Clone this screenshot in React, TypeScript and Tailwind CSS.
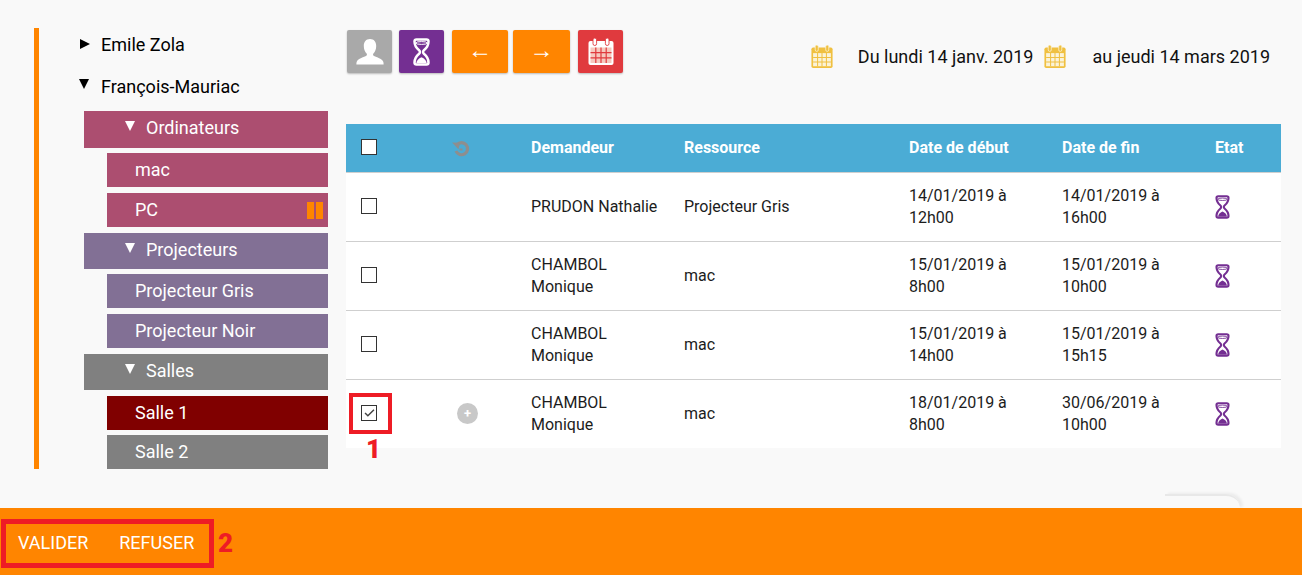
import React from 'react';

const ROWS = [
  { demandeur: 'PRUDON Nathalie', ressource: 'Projecteur Gris', debut: ['14/01/2019 à', '12h00'], fin: ['14/01/2019 à', '16h00'] },
  { demandeur: 'CHAMBOL Monique', ressource: 'mac', debut: ['15/01/2019 à', '8h00'], fin: ['15/01/2019 à', '10h00'] },
  { demandeur: 'CHAMBOL Monique', ressource: 'mac', debut: ['15/01/2019 à', '14h00'], fin: ['15/01/2019 à', '15h15'] },
  { demandeur: 'CHAMBOL Monique', ressource: 'mac', debut: ['18/01/2019 à', '8h00'], fin: ['30/06/2019 à', '10h00'], checked: true },
];

const Hourglass: React.FC<{ className?: string }> = ({ className }) => (
  <svg viewBox="0 0 17 28" className={className} fill="none">
    <path
      d="M3.500 1.500h10c1.200 0 2 .8 2 2 0 4.200-2.200 6.800-4.600 8.800-1.100.9-1.100 2.500 0 3.400 2.400 2 4.600 4.600 4.600 8.800 0 1.200-.8 2-2 2h-10c-1.200 0-2-.8-2-2 0-4.200 2.200-6.800 4.600-8.800 1.100-.9 1.100-2.500 0-3.400C3.700 10.300 1.500 7.700 1.500 3.500c0-1.200.8-2 2-2z"
      stroke="currentColor"
      strokeWidth="2.500"
    />
    <ellipse cx="8.500" cy="5" rx="5.500" ry="1.400" stroke="currentColor" strokeWidth="1" />
    <path d="M3.300 25.300c.3-2.800 2.300-4.800 5.200-6 2.900 1.200 4.900 3.200 5.200 6z" fill="currentColor" />
  </svg>
);

const Calendar: React.FC<{ className?: string; grid: string; lines?: string }> = ({ className, grid, lines }) => (
  <svg viewBox="0 0 26 27" className={className}>
    <rect x="0.500" y="3" width="25" height="24" rx="2" fill="currentColor" />
    <rect x="5" y="0" width="3.600" height="7.500" rx="1.800" fill="currentColor" stroke={lines ?? grid} strokeWidth="0.900" />
    <rect x="17.400" y="0" width="3.600" height="7.500" rx="1.800" fill="currentColor" stroke={lines ?? grid} strokeWidth="0.900" />
    <rect x="2.500" y="9.500" width="21" height="15.500" fill={grid} />
    <path d="M7.800 9.500v15.500M13 9.500v15.500M18.200 9.500v15.500M2.500 14.700h21M2.500 19.900h21" stroke={lines ?? 'currentColor'} strokeWidth="1.200" />
  </svg>
);

const TreeItem: React.FC<{ label: string; className: string; badge?: boolean }> = ({ label, className, badge }) => (
  <div className={`ml-[23px] h-[34px] pl-[28px] pr-[5px] flex items-center justify-between text-[18px] text-white ${className}`}>
    <span className="mb-[2px]">{label}</span>
    {badge && (
      <span className="flex gap-[2px]">
        <span className="w-[7px] h-[17px] bg-[#ff8500]" />
        <span className="w-[7px] h-[17px] bg-[#ff8500]" />
      </span>
    )}
  </div>
);

const TreeGroup: React.FC<{ label: string; className: string }> = ({ label, className }) => (
  <div className={`h-[37px] pl-[41px] flex items-center gap-[11px] text-[18px] text-white ${className}`}>
    <span className="w-0 h-0 border-x-[5.500px] border-x-transparent border-t-[10px] border-t-white mb-[7px]" />
    <span className="mb-[4px]">{label}</span>
  </div>
);

const Check: React.FC<{ checked?: boolean; header?: boolean }> = ({ checked, header }) => (
  <div className={`w-4 h-4 mb-[2px] border-[1.500px] border-[#333] flex items-center justify-center ${header ? 'bg-white' : ''}`}>
    {checked && (
      <svg viewBox="0 0 16 16" className="w-[13px] h-[13px] text-[#444]" fill="none">
        <path d="M2.500 8.500l3.500 3.500 7.500-7.500" stroke="currentColor" strokeWidth="1.800" />
      </svg>
    )}
  </div>
);

const ToolButton: React.FC<{ className: string; children: React.ReactNode }> = ({ className, children }) => (
  <button className={`h-[43px] rounded-[2px] flex items-center justify-center text-white shadow-[0_1px_2px_rgba(0,0,0,0.25)] ${className}`}>
    {children}
  </button>
);

export default function App() {
  return (
    <div className="h-screen flex flex-col bg-[#f9f9f9] overflow-hidden text-black font-['Roboto',sans-serif]">
      <div className="relative flex-1 flex">
        {/* arbre des ressources */}
        <aside className="ml-[34px] mt-[28px] h-[441px] w-[294px] border-l-[5px] border-[#ff8500] pl-[45px] shrink-0">
          <div className="h-[34px] pb-[2px] flex items-center gap-[11px] text-[18px]">
            <span className="ml-[-4px] w-0 h-0 border-y-[5px] border-y-transparent border-l-[10px] border-l-black mb-[1px]" />
            <span>Emile Zola</span>
          </div>
          <div className="h-[49px] flex items-center gap-[12px] text-[18px]">
            <span className="ml-[-5px] w-0 h-0 border-x-[5.500px] border-x-transparent border-t-[10px] border-t-black mb-[6px]" />
            <span>François-Mauriac</span>
          </div>
          <div className="flex flex-col">
            <TreeGroup label="Ordinateurs" className="bg-[#ac4e70]" />
            <TreeItem label="mac" className="bg-[#ac4e70] mt-[5px]" />
            <TreeItem label="PC" badge className="bg-[#ac4e70] mt-[6px]" />
            <TreeGroup label="Projecteurs" className="bg-[#827095] mt-[6px] !h-[36px]" />
            <TreeItem label="Projecteur Gris" className="bg-[#827095] mt-[5px]" />
            <TreeItem label="Projecteur Noir" className="bg-[#827095] mt-[6px]" />
            <TreeGroup label="Salles" className="bg-[#808080] mt-[6px] !h-[36px]" />
            <TreeItem label="Salle 1" className="bg-[#800000] mt-[6px]" />
            <TreeItem label="Salle 2" className="bg-[#808080] mt-[5px]" />
          </div>
        </aside>

        <main className="ml-[18px] w-[935px] shrink-0">
          <div className="mt-[30px] h-[43px] flex items-center">
            <ToolButton className="w-[45px] ml-[1px] bg-[#a9a9a9]">
              <svg viewBox="0 0 28 26" className="w-[28px] h-[26px]">
                <path d="M14 0c4 0 6.200 2.800 6.200 7 0 3.400-1.300 6-2.800 7.600-.7.800-.4 2 .6 2.500 3 1.300 7.600 2.900 9 5.100.6 1 .6 2.300.6 3.300H.400c0-1 0-2.300.6-3.300 1.400-2.200 6-3.800 9-5.100 1-.5 1.300-1.700.6-2.500C9.100 13 7.800 10.400 7.800 7 7.800 2.800 10 0 14 0z" fill="#fff" />
              </svg>
            </ToolButton>
            <ToolButton className="w-[45px] ml-[7px] bg-[#742f92]">
              <Hourglass className="w-[17px] h-[28px]" />
            </ToolButton>
            <ToolButton className="w-[56px] ml-[8px] bg-[#ff8500] text-[24px] font-['Liberation_Sans',sans-serif] pb-[4px]">←</ToolButton>
            <ToolButton className="w-[57px] ml-[5px] bg-[#ff8500] text-[24px] font-['Liberation_Sans',sans-serif] pb-[4px]">→</ToolButton>
            <ToolButton className="w-[45px] ml-[8px] bg-[#e03a3e]">
              <Calendar className="w-[26px] h-[27px] text-white" grid="#f6c9bf" lines="#e03a3e" />
            </ToolButton>
            <div className="ml-auto flex items-center text-[18px] text-[#111] pr-[11px] pt-[9px]">
              <Calendar className="w-[22px] h-[23px] text-[#f0c040]" grid="#fbf3d8" />
              <span className="ml-[25px]">Du lundi 14 janv. 2019</span>
              <Calendar className="w-[22px] h-[23px] ml-[11px] text-[#f0c040]" grid="#fbf3d8" />
              <span className="ml-[26px]">au jeudi 14 mars 2019</span>
            </div>
          </div>

          <table className="mt-[51px] w-[935px] table-fixed border-collapse bg-white text-[16px] leading-[22px] text-[#1c1c1c]">
            <colgroup>
              <col className="w-[92px]" />
              <col className="w-[78px]" />
              <col className="w-[153px]" />
              <col className="w-[225px]" />
              <col className="w-[153px]" />
              <col className="w-[153px]" />
              <col className="w-[81px]" />
            </colgroup>
            <thead>
              <tr className="h-[48px] bg-[#4bacd5] text-white border-b-[1px] border-[#cfcfcf]">
                <th className="px-[15px] text-left"><Check header /></th>
                <th className="pl-[14px] text-left">
                  <svg viewBox="0 0 18 18" className="w-[18px] h-[18px] mt-[2px]" fill="none">
                    <path d="M5 4.800A6 6 0 1 1 4 11" stroke="#8e8e8e" strokeWidth="3.200" />
                    <path d="M0 2.500l8 .3-1.500 6.500z" fill="#8e8e8e" />
                    <path d="M7.500 9.500h3" stroke="#8e8e8e" strokeWidth="2" />
                  </svg>
                </th>
                <th className="px-[15px] text-left font-bold">Demandeur</th>
                <th className="px-[15px] text-left font-bold">Ressource</th>
                <th className="px-[15px] text-left font-bold">Date de début</th>
                <th className="px-[15px] text-left font-bold">Date de fin</th>
                <th className="px-[15px] text-left font-bold">Etat</th>
              </tr>
            </thead>
            <tbody>
              {ROWS.map((row, i) => (
                <tr key={i} className={`h-[69px] ${i < 3 ? 'border-b border-[#cfcfcf]' : ''}`}>
                  <td className="px-[15px]"><Check checked={row.checked} /></td>
                  <td className="pl-[19px]">
                    {row.checked && (
                      <span className="w-[21px] h-[21px] rounded-full bg-[#c8c8c8] flex items-center justify-center text-white text-[13px] font-bold leading-none">+</span>
                    )}
                  </td>
                  <td className="pl-[15px] pr-[10px]">{row.demandeur}</td>
                  <td className="px-[15px]">{row.ressource}</td>
                  <td className="px-[15px]">{row.debut[0]}<br />{row.debut[1]}</td>
                  <td className="px-[15px]">{row.fin[0]}<br />{row.fin[1]}</td>
                  <td className="px-[15px]"><Hourglass className="w-[15px] h-[24px] text-[#742f92]" /></td>
                </tr>
              ))}
            </tbody>
          </table>
        </main>

        {/* annotations */}
        <div className="absolute left-[349px] top-[393px] w-[43px] h-[41px] border-[4px] border-[#ee1c25]" />
        <span className="absolute left-[366px] top-[434px] text-[26px] leading-[30px] font-black text-[#ee1c25]">1</span>
        <div className="absolute left-[1165px] top-[494px] w-[75px] h-[14px] rounded-tr-[24px] border-t-2 border-[#e8e8e8] shadow-[3px_-1px_3px_rgba(0,0,0,0.06)]" />
      </div>

      <footer className="relative h-[67px] shrink-0 bg-[#ff8500] text-white text-[18px] flex items-center pl-[18px] pt-[2px] gap-[31px]">
        <span>VALIDER</span>
        <span>REFUSER</span>
        <div className="absolute left-[1px] top-[11px] w-[213px] h-[49px] border-[5px] border-[#ee1c25]" />
        <span className="absolute left-[218px] top-[20px] text-[26px] leading-[30px] font-black text-[#ee1c25]">2</span>
      </footer>
    </div>
  );
}
